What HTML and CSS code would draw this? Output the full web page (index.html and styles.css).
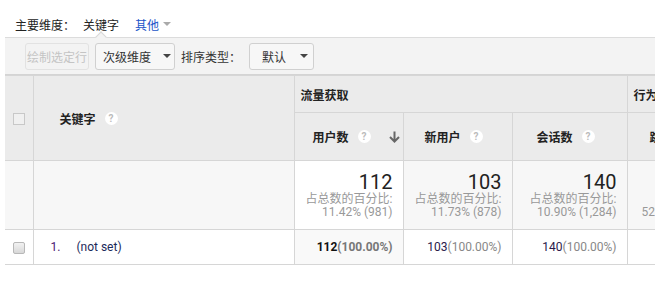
FILE: index.html
```html
<!DOCTYPE html>
<html lang="zh">
<head>
<meta charset="utf-8">
<link rel="stylesheet" href="styles.css">
</head>
<body>
<div class="dims">
  <span class="dims-label">主要维度：</span>
  <span class="dims-active">关键字</span>
  <span class="dims-other">其他<span class="caret caret-light"></span></span>
</div>
<div class="toolbar">
  <span class="notch"></span>
  <button class="btn btn-disabled">绘制选定行</button>
  <button class="btn btn-drop">次级维度<span class="caret"></span></button>
  <span class="tb-label">排序类型：</span>
  <button class="btn btn-drop btn-sort">默认<span class="caret"></span></button>
</div>
<div class="table-wrap">
<table class="grid">
  <colgroup>
    <col class="c-check"><col class="c-key"><col class="c-num"><col class="c-num"><col class="c-num2"><col class="c-more">
  </colgroup>
  <thead>
    <tr class="h1">
      <th rowspan="2" class="chk-cell"><span class="chk-head"></span></th>
      <th rowspan="2" class="key-head"><span class="hlabel">关键字</span><span class="q">?</span></th>
      <th colspan="3" class="group">流量获取</th>
      <th class="group">行为</th>
    </tr>
    <tr class="h2">
      <th class="mh sorted"><span class="hlabel">用户数</span><span class="q">?</span><span class="arrow">
        <svg width="11" height="12" viewBox="0 0 11 12"><path d="M5.5 0.5v9.5M1 6l4.5 4.5L10 6" fill="none" stroke="#666" stroke-width="2"/></svg></span></th>
      <th class="mh"><span class="hlabel">新用户</span><span class="q">?</span></th>
      <th class="mh"><span class="hlabel">会话数</span><span class="q">?</span></th>
      <th class="mh"><span class="hlabel">跳</span></th>
    </tr>
  </thead>
  <tbody>
    <tr class="sum">
      <td class="s-blank"></td>
      <td class="s-blank"></td>
      <td class="s-num sorted-sum"><div class="big">112</div><div class="pct">占总数的百分比:</div><div class="pct">11.42% (981)</div></td>
      <td class="s-num"><div class="big">103</div><div class="pct">占总数的百分比:</div><div class="pct">11.73% (878)</div></td>
      <td class="s-num"><div class="big">140</div><div class="pct">占总数的百分比:</div><div class="pct">10.90% (1,284)</div></td>
      <td class="s-num s-cut"><div class="big">&nbsp;</div><div class="pct">&nbsp;</div><div class="pct">52.50%</div></td>
    </tr>
    <tr class="row">
      <td class="chk-cell"><span class="chk"></span></td>
      <td class="key"><span class="idx">1.</span><span class="kw">(not set)</span></td>
      <td class="d-num d-sorted"><b>112</b><span class="dp-b">(100.00%)</span></td>
      <td class="d-num"><span class="dv">103</span><span class="dp">(100.00%)</span></td>
      <td class="d-num"><span class="dv">140</span><span class="dp">(100.00%)</span></td>
      <td class="d-num"></td>
    </tr>
  </tbody>
</table>
</div>
</body>
</html>
```
FILE: styles.css
```css
* { box-sizing: border-box; }
html, body { margin: 0; padding: 0; background: #fff; }
body {
  font-family: Roboto, "Noto Sans CJK SC", sans-serif;
  font-size: 12px;
  color: #222;
  width: 655px;
  overflow: hidden;
}
.dims {
  height: 37px;
  display: flex;
  align-items: center;
  padding: 11px 0 0 15px;
  font-size: 12px;
}
.dims-label { color: #222; }
.dims-active { margin-left: 8px; color: #222; }
.dims-other { margin-left: 16px; color: #1a55c8; display: inline-flex; align-items: center; }
.caret {
  display: inline-block;
  width: 0; height: 0;
  border-left: 4px solid transparent;
  border-right: 4px solid transparent;
  border-top: 4px solid #444;
  margin-left: 11px;
}
.caret-light { border-top-color: #aaa; margin-left: 4px; }
.toolbar {
  position: relative;
  margin-left: 5px;
  height: 38px;
  background: #f3f3f3;
  border-top: 1px solid #dcdcdc;
  border-bottom: 1px solid #d4d4d4;
  display: flex;
  align-items: center;
  padding-left: 20px;
}
.notch {
  position: absolute;
  top: -5px;
  left: 92px;
  width: 8px; height: 8px;
  background: #f3f3f3;
  border-left: 1px solid #d8d8d8;
  border-top: 1px solid #d8d8d8;
  transform: rotate(45deg);
}
.btn {
  font-family: inherit;
  font-size: 12px;
  height: 27px;
  border: 1px solid #d0d0d0;
  border-radius: 3px;
  background: #f7f7f7;
  color: #333;
  padding: 0 8px;
  display: inline-flex;
  align-items: center;
  white-space: nowrap;
  margin: 0;
}
.btn-disabled {
  color: #c4c4c4; border-color: #e2e2e2; background: #f3f3f3;
  width: 64px; padding: 0; justify-content: center;
}
.btn-drop { margin-left: 6px; width: 80px; padding: 0 0 0 7px; }
.btn-drop .caret { margin-left: 12px; }
.tb-label { margin-left: 6px; color: #333; }
.btn-sort { margin-left: 8px; width: 65px; padding-left: 12px; }
.btn-sort .caret { margin-left: 14px; }

.table-wrap { margin-left: 5px; width: 650px; overflow: hidden; }
.grid {
  border-collapse: collapse;
  table-layout: fixed;
  width: 740px;
}
.c-check { width: 28px; }
.c-key { width: 261px; }
.c-num { width: 109px; }
.c-num2 { width: 115px; }
.c-more { width: 118px; }
.grid th, .grid td {
  border: 1px solid #d6d6d6;
  padding: 0;
}
.grid tr > :first-child { border-left: none; }
.grid thead th {
  background: #ebebeb;
  font-weight: bold;
  text-align: left;
  color: #222;
}
.h1 { height: 37px; }
.h2 { height: 48px; }
.grid .group { padding-left: 6px; }
.grid .chk-cell { text-align: center; vertical-align: middle; }
.chk-head {
  display: inline-block; width: 12px; height: 12px;
  border: 1px solid #c8c8c8; background: #f0f0f0;
  vertical-align: middle;
}
.grid .key-head { padding-left: 26px; }
.hlabel { vertical-align: middle; }
.q {
  display: inline-block;
  width: 13px; height: 13px;
  border-radius: 50%;
  background: #fff;
  color: #bbb;
  font-size: 10px;
  font-weight: bold;
  line-height: 13px;
  text-align: center;
  margin-left: 9px;
  vertical-align: middle;
}
.grid .mh { padding-left: 18px; position: relative; }
.arrow { position: absolute; right: 3px; top: 18px; }
.arrow svg { display: block; }
.grid .mh:nth-child(2) { padding-left: 21px; }
.grid .mh:nth-child(3) { padding-left: 24px; }
.grid .mh:nth-child(4) { padding-left: 22px; }

.sum { height: 69px; }
.sum td { background: #f7f7f7; }
.sum td.sorted-sum { background: #fff; }
.grid .s-num { text-align: right; padding-right: 10px; vertical-align: top; padding-top: 10px; }
.grid .s-cut { text-align: left; padding-left: 14px; }
.big { font-size: 20px; line-height: 22px; color: #222; }
.pct { font-size: 12px; line-height: 13px; color: #999; }

.row { height: 35px; }
.row td { background: #fff; }
.row td.d-sorted { background: #f9f9f9; }
.chk {
  display: inline-block; width: 12px; height: 12px;
  border: 1px solid #b8b8b8; border-radius: 2px;
  background: linear-gradient(#f2f2f2, #d8d8d8);
  vertical-align: middle;
}
.grid .key { padding-left: 17px; }
.idx { color: #4b1a72; }
.kw { margin-left: 16px; color: #1c2a5a; }
.grid .d-num { text-align: right; padding-right: 10px; }
.d-num b { color: #111; }
.dp-b { color: #777; font-weight: bold; }
.dv { color: #2a1a4a; }
.dp { color: #888; }
```
